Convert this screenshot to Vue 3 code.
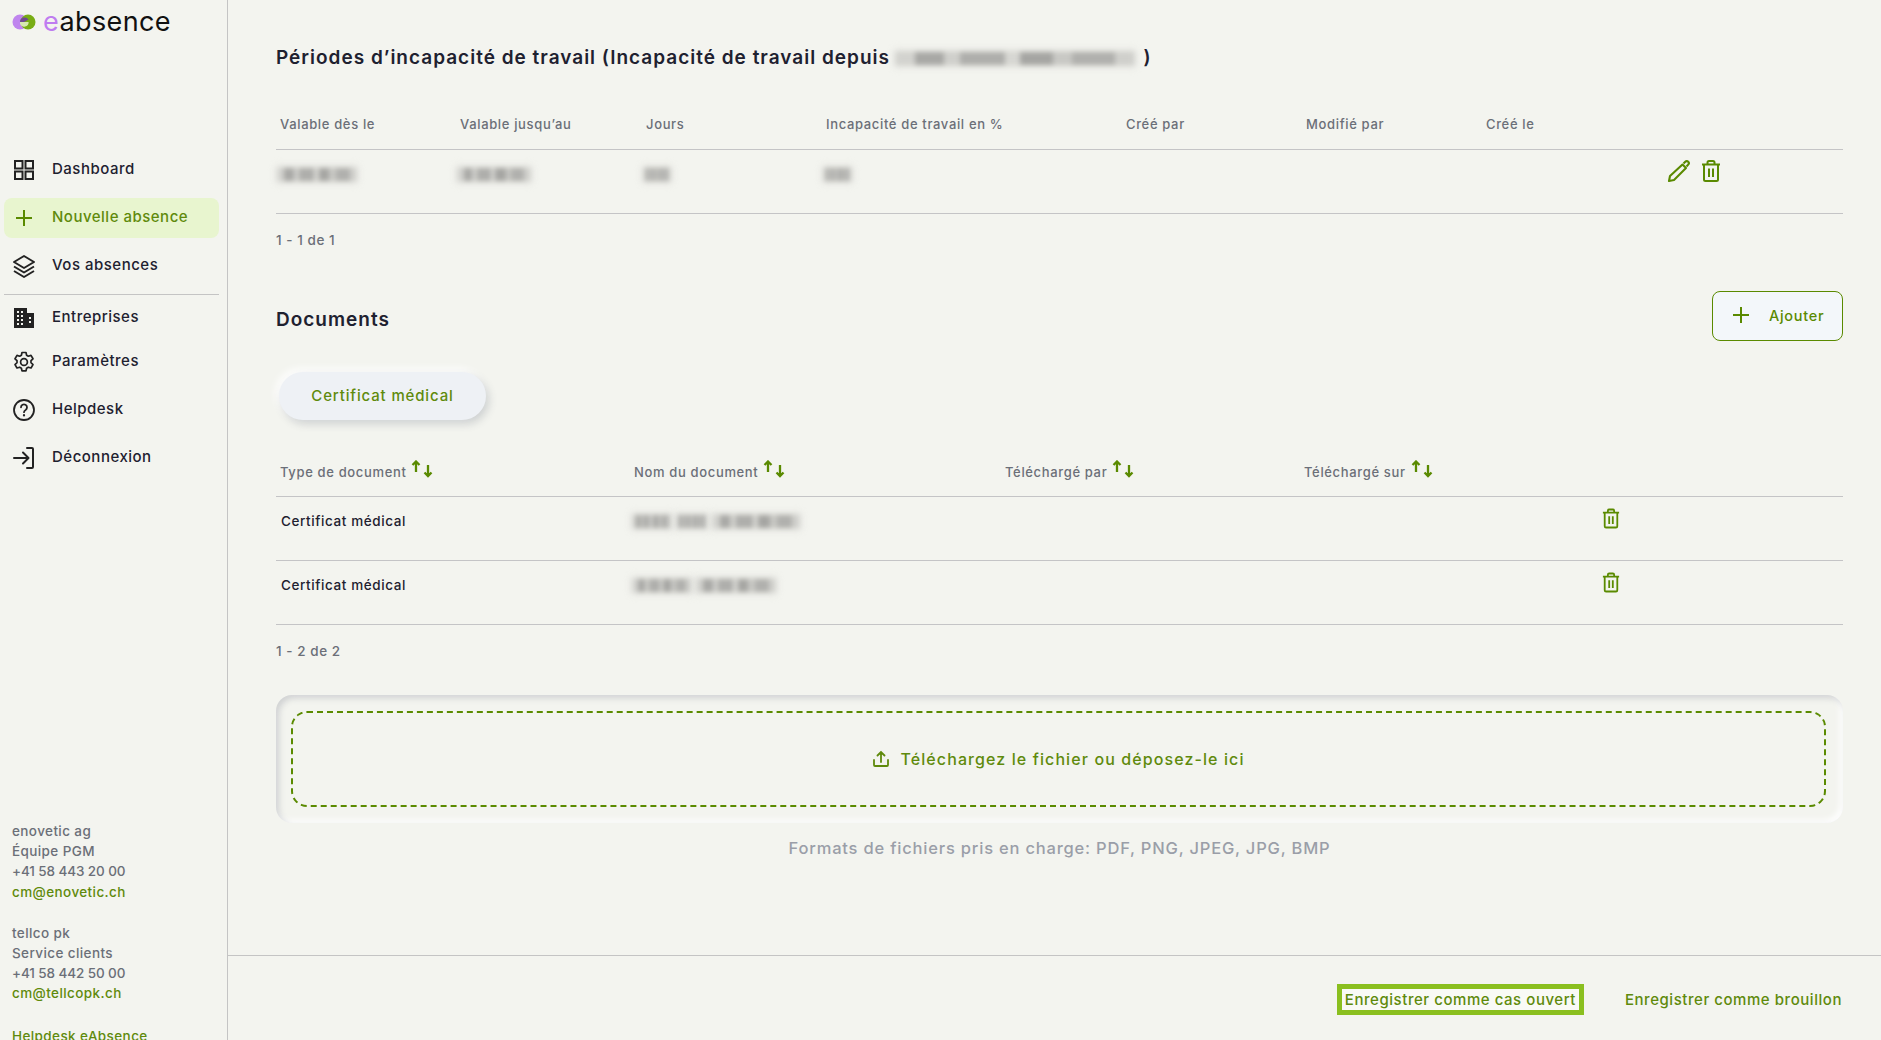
<script setup>
const nav = [
  { label: 'Dashboard', icon: 'grid' },
  { label: 'Nouvelle absence', icon: 'plus', active: true },
  { label: 'Vos absences', icon: 'layers' },
]
const nav2 = [
  { label: 'Entreprises', icon: 'building' },
  { label: 'Paramètres', icon: 'gear' },
  { label: 'Helpdesk', icon: 'help', wide: true },
  { label: 'Déconnexion', icon: 'login', wide: true },
]
const periodHeads = ['Valable dès le', 'Valable jusqu’au', 'Jours', 'Incapacité de travail en %', 'Créé par', 'Modifié par', 'Créé le']
const periodBlurs = [78, 72, 26, 27]
const docHeads = ['Type de document', 'Nom du document', 'Téléchargé par', 'Téléchargé sur']
const docs = [
  { type: 'Certificat médical', blur: [38, 30, 86] },
  { type: 'Certificat médical', blur: [58, 78] },
]
</script>

<template>
  <div class="app">
    <aside class="side">
      <div class="logo">
        <svg width="24" height="16" viewBox="0 0 24 16">
          <circle cx="8" cy="8" r="7.5" fill="#bf85ee" />
          <circle cx="16" cy="8" r="7.5" fill="#78ad14" />
          <path d="M8 8a4.6 4.6 0 0 1 8.5-2.4L12 8z" fill="#6f4a8f" />
          <path d="M8 8h8.6a4.5 4.5 0 0 1-8.6 2z" fill="#d6e8b0" />
        </svg>
        <span class="brand"><em>e</em>absence</span>
      </div>

      <nav class="nav">
        <a v-for="n in nav" :key="n.label" class="item" :class="{ active: n.active }">
          <span class="ico">
            <svg v-if="n.icon === 'grid'" width="24" height="24" viewBox="0 0 24 24" fill="none" stroke="currentColor" stroke-width="2">
              <rect x="3" y="3" width="7.5" height="7.5" /><rect x="13.5" y="3" width="7.5" height="7.5" />
              <rect x="3" y="13.5" width="7.5" height="7.5" /><rect x="13.5" y="13.5" width="7.5" height="7.5" />
            </svg>
            <svg v-else-if="n.icon === 'plus'" width="24" height="24" viewBox="0 0 24 24" fill="none" stroke="currentColor" stroke-width="2">
              <path d="M4 12h16M12 4v16" />
            </svg>
            <svg v-else width="24" height="24" viewBox="0 0 24 24" fill="none" stroke="currentColor" stroke-width="2" stroke-linejoin="round">
              <path d="M12 2 22 8l-10 6L2 8z" /><path d="m2 12.5 10 6 10-6" /><path d="m2 17 10 6 10-6" />
            </svg>
          </span>
          <span class="lbl">{{ n.label }}</span>
        </a>
        <div class="sep"></div>
        <a v-for="n in nav2" :key="n.label" class="item" :class="{ wide: n.wide }">
          <span class="ico">
            <svg v-if="n.icon === 'building'" width="24" height="24" viewBox="0 0 24 24">
              <path fill="currentColor" fill-rule="evenodd" d="M2 2h13v5h7v15H2zM5 5v2h2V5zm4 0v2h2V5zM5 9v2h2V9zm4 0v2h2V9zm-4 4v2h2v-2zm4 0v2h2v-2zm-4 4v2h2v-2zm4 0v2h2v-2zm8-6v2h2v-2zm0 4v2h2v-2z" />
            </svg>
            <svg v-else-if="n.icon === 'gear'" width="24" height="24" viewBox="0 0 24 24" fill="none" stroke="currentColor" stroke-width="1.7" stroke-linejoin="round">
              <path d="M10 2.5h4l.6 2.7 1.7 1 2.7-.8 2 3.4-2 1.9v2l2 1.9-2 3.4-2.7-.8-1.7 1-.6 2.7h-4l-.6-2.7-1.7-1-2.7.8-2-3.4 2-1.9v-2l-2-1.9 2-3.4 2.7.8 1.7-1z" />
              <circle cx="12" cy="12" r="3.4" />
            </svg>
            <svg v-else-if="n.icon === 'help'" width="24" height="24" viewBox="0 0 24 24" fill="none" stroke="currentColor" stroke-width="1.8" stroke-linecap="round">
              <circle cx="12" cy="12" r="10" /><path d="M9 9.3a3 3 0 1 1 4.6 2.6c-1 .6-1.6 1.2-1.6 2.3" /><path d="M12 17.2v.2" stroke-width="2.2" />
            </svg>
            <svg v-else width="24" height="24" viewBox="0 0 24 24" fill="none" stroke="currentColor" stroke-width="2" stroke-linecap="round" stroke-linejoin="round">
              <path d="M15 2h5a1 1 0 0 1 1 1v18a1 1 0 0 1-1 1h-5" /><path d="M2 12h14M11 6.5l5.5 5.500-5.500 5.500" />
            </svg>
          </span>
          <span class="lbl">{{ n.label }}</span>
        </a>
      </nav>

      <div class="contact">
        <p>enovetic ag</p><p>Équipe PGM</p><p class="phone">+41 58 443 20 00</p><a>cm@enovetic.ch</a>
        <p class="gap">tellco pk</p><p>Service clients</p><p class="phone">+41 58 442 50 00</p><a>cm@tellcopk.ch</a>
        <a class="gap help">Helpdesk eAbsence</a>
      </div>
    </aside>

    <main class="main">
      <div class="content">
        <h1 class="title">Périodes d’incapacité de travail (Incapacité de travail depuis <span class="blur title-blur"></span> )</h1>

        <div class="grid periods head">
          <span v-for="h in periodHeads" :key="h">{{ h }}</span>
        </div>
        <div class="grid periods row">
          <span v-for="(b, i) in periodBlurs" :key="i" class="cell"><i class="blur" :style="{ width: b + 'px' }"></i></span>
          <span></span><span></span><span></span>
          <span class="actions">
            <svg width="24" height="24" viewBox="0 0 24 24" fill="none" stroke="currentColor" stroke-width="2.100" stroke-linejoin="round">
              <path d="M15.500 5.500 19 9 7 21l-5 1 1-5z" /><path d="m16.500 4.500 1.800-1.800a1.800 1.800 0 0 1 2.900 2.900L19.500 7.500" />
            </svg>
            <svg width="20" height="22" viewBox="0 0 20 22" fill="none" stroke="currentColor" stroke-width="2">
              <path d="M1 4.500h18M6.500 4.500V2.500a1.500 1.500 0 0 1 1.500-1.500h4a1.500 1.500 0 0 1 1.500 1.500v2M3 4.500v15a1.500 1.500 0 0 0 1.500 1.500h11a1.500 1.500 0 0 0 1.500-1.500v-15M8 8.500v8.500M12 8.500v8.500" />
            </svg>
          </span>
        </div>
        <p class="count first">1 - 1 de 1</p>

        <div class="doc-top">
          <h2>Documents</h2>
          <button class="add">
            <svg width="18" height="18" viewBox="0 0 18 18" fill="none" stroke="currentColor" stroke-width="2"><path d="M1 9h16M9 1v16" /></svg>
            Ajouter
          </button>
        </div>

        <button class="pill">Certificat médical</button>

        <div class="grid docs dhead">
          <span v-for="h in docHeads" :key="h" class="sort">
            {{ h }}
            <svg width="22" height="18" viewBox="0 0 22 18" fill="none" stroke="currentColor" stroke-width="2.300">
              <path d="M5 12V2M1.500 5 5 1.500 8.500 5M17 5v11M13.500 12.500 17 16l3.500-3.500" />
            </svg>
          </span>
        </div>
        <div v-for="(d, i) in docs" :key="i" class="grid docs drow">
          <strong>{{ d.type }}</strong>
          <span class="segs">
            <i v-for="(w, j) in d.blur" :key="j" class="blur" :style="{ width: w + 'px' }"></i>
          </span>
          <span></span><span></span>
          <span class="trash">
            <svg width="18" height="21" viewBox="0 0 20 22" fill="none" stroke="currentColor" stroke-width="2">
              <path d="M1 4.500h18M6.500 4.500V2.500a1.500 1.500 0 0 1 1.500-1.500h4a1.500 1.500 0 0 1 1.500 1.500v2M3 4.500v15a1.500 1.500 0 0 0 1.500 1.500h11a1.500 1.500 0 0 0 1.500-1.500v-15M8 8.500v8.500M12 8.500v8.500" />
            </svg>
          </span>
        </div>
        <p class="count second">1 - 2 de 2</p>

        <div class="drop">
          <div class="dash">
            <svg width="18" height="18" viewBox="0 0 18 18" fill="none" stroke="currentColor" stroke-width="1.800" stroke-linecap="round">
              <path d="M9 12V2M5.500 5.500 9 2l3.500 3.500M2 10v5a1 1 0 0 0 1 1h12a1 1 0 0 0 1-1v-5" />
            </svg>
            Téléchargez le fichier ou déposez-le ici
          </div>
        </div>
        <p class="formats">Formats de fichiers pris en charge: PDF, PNG, JPEG, JPG, BMP</p>
      </div>

      <footer class="foot">
        <button class="link focus">Enregistrer comme cas ouvert</button>
        <button class="link">Enregistrer comme brouillon</button>
      </footer>
    </main>
  </div>
</template>

<style>
html, body { margin: 0; background: #f3f4ef; }
</style>

<style scoped>
.app {
  display: flex;
  width: 1881px;
  height: 1040px;
  overflow: hidden;
  background: #f3f4ef;
  color: #1e2130;
  font-family: Inter, "Noto Sans", sans-serif;
}
.side {
  box-sizing: border-box;
  flex: 0 0 228px;
  height: 1040px;
  overflow: hidden;
  border-right: 1px solid #c4c4c4;
  padding: 0 8px 0 4px;
}
.logo {
  display: flex;
  align-items: center;
  gap: 7px;
  height: 43px;
  padding-left: 8px;
}
.brand {
  font-size: 27px;
  font-weight: 400;
  color: #111;
  letter-spacing: 0.4px;
  line-height: 1;
}
.brand em { font-style: normal; color: #bf7df0; }
.nav { margin-top: 107px; display: flex; flex-direction: column; gap: 8px; }
.item {
  display: flex;
  align-items: center;
  gap: 16px;
  height: 40px;
  padding-left: 8px;
  border-radius: 8px;
  font-size: 15px;
  font-weight: 500;
  letter-spacing: 0.5px;
  color: #1e2130;
  margin-top: -4px;
}
.item:nth-child(-n+3) { margin-top: 0; }
.item.wide { margin-top: 0; }
.item.active { background: #e8f5cf; color: #5f8a0c; }
.lbl { margin-top: -3px; }
.ico { display: flex; width: 24px; height: 24px; color: #222; }
.active .ico { color: #5a8a00; }
.sep { height: 1px; background: #c4c4c4; margin: 0 0 -1px; }
.contact { margin: 343px 0 0 8px; font-size: 13.500px; font-weight: 500; line-height: 20.200px; letter-spacing: 0.4px; color: #6b6f78; }
.contact p { margin: 0; }
.contact .phone { letter-spacing: -0.1px; }
.contact a { display: block; color: #5f8a0c; }
.contact .gap { margin-top: 21px; }
.contact .help { margin-top: 22px; }

.main { flex: 1; display: flex; flex-direction: column; min-width: 0; }
.content { flex: 1; padding: 0 38px 0 48px; min-height: 0; }
.title {
  margin: 0;
  padding-top: 44px;
  font-size: 19px;
  line-height: 28px;
  font-weight: 600;
  letter-spacing: 1px;
  color: #1e2130;
}
.blur {
  display: inline-block;
  height: 13px;
  background: linear-gradient(90deg, #d2d2ce 0 8%, #a8a8a5 8% 20%, #cfcfcb 20% 27%, #aeaeab 27% 46%, #d6d6d2 46% 52%, #a5a5a2 52% 66%, #c8c8c4 66% 74%, #b0b0ad 74% 92%, #cfcfcb 92%);
  box-shadow: 0 0 5px 2px #dcdcd8;
  filter: blur(2.5px);
}
.title-blur { width: 238px; vertical-align: middle; margin: 0 4px 0 0; }
.grid { display: grid; align-items: center; border-bottom: 1px solid #c4c4c6; }
.periods { grid-template-columns: 180px 186px 180px 300px 180px 180px 182px 1fr; padding-left: 4px; }
.head {
  margin-top: 29px;
  height: 48px;
  font-size: 13px;
  font-weight: 500;
  letter-spacing: 0.65px;
  color: #6b6f78;
}
.head span { margin-top: -2px; }
.row { height: 63px; }
.cell { display: flex; margin-left: -2px; margin-top: -14px; }
.actions { display: flex; align-items: center; gap: 10px; color: #5a8a00; margin-top: -22px; margin-left: -1px; }
.count { margin: 0; font-size: 13.500px; font-weight: 500; letter-spacing: 0.55px; line-height: 20px; color: #6b6f78; }
.first { margin-top: 16px; }
.doc-top { display: flex; justify-content: space-between; align-items: center; margin-top: 41px; height: 50px; }
.doc-top h2 { margin: 7px 0 0; font-size: 19px; font-weight: 600; letter-spacing: 1px; color: #1e2130; }
.add {
  display: flex;
  align-items: center;
  gap: 19px;
  box-sizing: border-box;
  width: 131px;
  height: 50px;
  padding: 0 0 2px 19px;
  background: #f3f7fa;
  border: 1px solid #5a8a00;
  border-radius: 8px;
  color: #5a8a00;
  font: 500 14.500px Inter, sans-serif;
  letter-spacing: 0.7px;
}
.pill {
  display: block;
  width: 207px;
  height: 48px;
  margin: 31px 0 0 3px;
  padding: 0 0 2px;
  border: 0;
  border-radius: 24px;
  background: #eef1f5;
  box-shadow: 3px 4px 8px rgba(60, 70, 90, 0.2), -3px -3px 8px #fff;
  color: #5f8a0c;
  font: 500 15px Inter, sans-serif;
  letter-spacing: 0.85px;
}
.docs { grid-template-columns: 354px 371px 299px 296px 1fr; padding-left: 4px; }
.dhead {
  margin-top: 28px;
  height: 48px;
  font-size: 13px;
  font-weight: 500;
  letter-spacing: 0.65px;
  color: #6b6f78;
}
.sort { display: flex; align-items: center; gap: 6px; }
.sort svg { color: #5a8a00; margin-top: -7px; margin-left: -1px; }
.drow { height: 63px; font-size: 13.500px; letter-spacing: 0.6px; }
.drow strong { font-weight: 500; padding-left: 1px; margin-top: -16px; color: #1e2130; }
.segs { display: flex; gap: 6px; margin-left: -1px; margin-top: -14px; }
.trash { display: flex; color: #5a8a00; margin-left: 2px; margin-top: -21px; }
.second { margin-top: 16px; }
.drop {
  box-sizing: border-box;
  height: 128px;
  margin-top: 34px;
  padding: 16px 17px 17px 15px;
  border-radius: 16px;
  background: #f3f4ef;
  box-shadow: inset 3px 3px 6px rgba(80, 85, 110, 0.22), inset -3px -3px 6px #fff;
}
.dash {
  box-sizing: border-box;
  height: 96px;
  display: flex;
  align-items: center;
  justify-content: center;
  gap: 10px;
  border: 2px dashed #5a8a00;
  border-radius: 16px;
  color: #5f8a0c;
  font-size: 16px;
  font-weight: 500;
  letter-spacing: 1.1px;
}
.formats {
  margin: 13px 0 0;
  text-align: center;
  font-size: 16.500px;
  font-weight: 500;
  letter-spacing: 0.8px;
  line-height: 24px;
  color: #9a9ea8;
}
.foot {
  flex: 0 0 85px;
  box-sizing: border-box;
  border-top: 1px solid #c4c4c4;
  display: flex;
  justify-content: flex-end;
  align-items: flex-start;
  gap: 41px;
  padding: 28px 39px 0 0;
}
.link {
  box-sizing: border-box;
  height: 31px;
  padding: 0 0 1px;
  border: 0;
  background: none;
  color: #5f8a0c;
  font: 500 15px Inter, sans-serif;
  letter-spacing: 0.55px;
}
.focus { width: 247px; outline: 5px solid #8abf1f; outline-offset: -5px; background: #f9faf5; }
</style>
